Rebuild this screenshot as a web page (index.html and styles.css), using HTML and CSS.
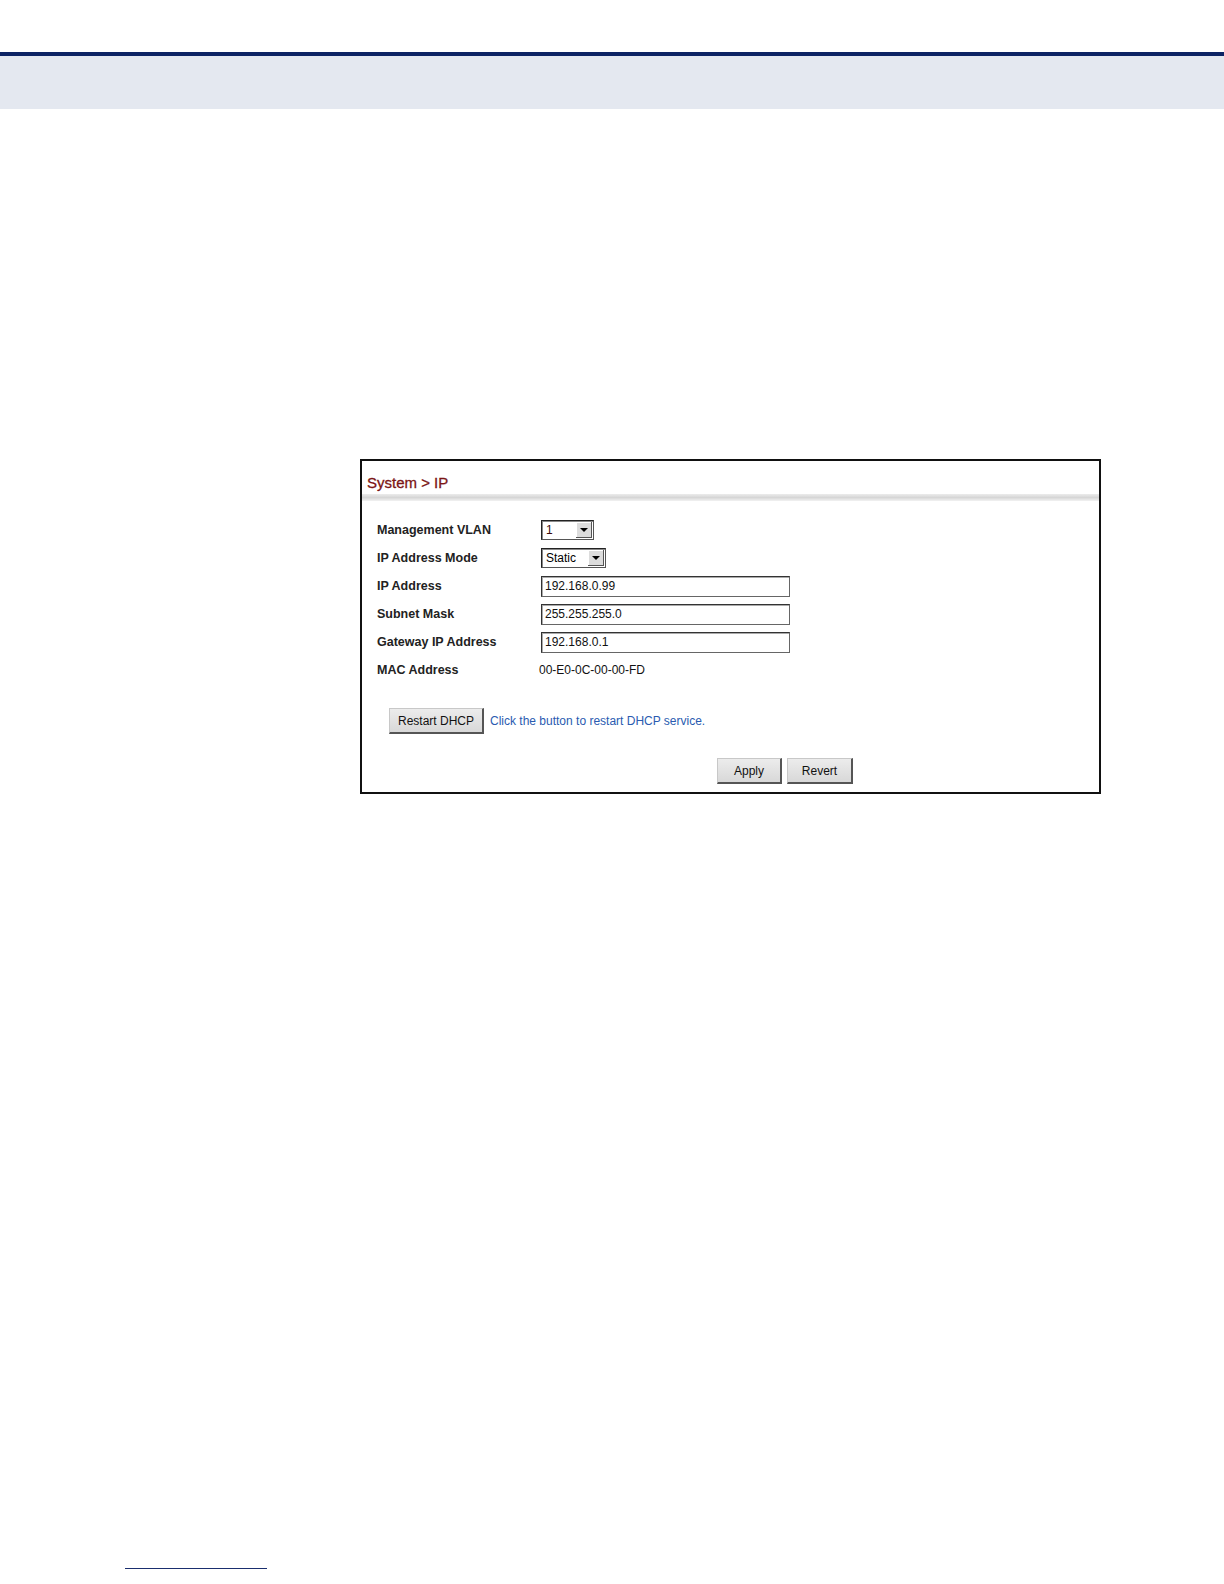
FILE: index.html
```html
<!DOCTYPE html>
<html>
<head>
<meta charset="utf-8">
<link rel="stylesheet" href="styles.css">
</head>
<body>
<div class="header">
  <div class="header-band"></div>
</div>
<div class="content">
  <div class="panel">
    <div class="panel-title">System &gt; IP</div>
    <div class="panel-rule"></div>
    <div class="form">
      <div class="label">Management VLAN</div>
      <div class="field"><span class="select sel-vlan"><span class="sel-val">1</span><span class="sel-btn"><span class="arrow"></span></span></span></div>
      <div class="label">IP Address Mode</div>
      <div class="field"><span class="select sel-mode"><span class="sel-val">Static</span><span class="sel-btn"><span class="arrow"></span></span></span></div>
      <div class="label">IP Address</div>
      <div class="field"><span class="input">192.168.0.99</span></div>
      <div class="label">Subnet Mask</div>
      <div class="field"><span class="input">255.255.255.0</span></div>
      <div class="label">Gateway IP Address</div>
      <div class="field"><span class="input">192.168.0.1</span></div>
      <div class="label">MAC Address</div>
      <div class="field"><span class="mac">00-E0-0C-00-00-FD</span></div>
    </div>
    <div class="dhcp-row">
      <span class="btn btn-dhcp">Restart DHCP</span>
      <span class="hint">Click the button to restart DHCP service.</span>
    </div>
    <div class="actions">
      <span class="btn btn-apply">Apply</span>
      <span class="btn btn-revert">Revert</span>
    </div>
  </div>
</div>
<div class="footer">
  <div class="footer-line"></div>
</div>
</body>
</html>
```

FILE: styles.css
```css
html, body {
  margin: 0;
  padding: 0;
  background: #ffffff;
  font-family: "Liberation Sans", Arial, sans-serif;
}
body {
  width: 1224px;
  height: 1584px;
  position: relative;
  overflow: hidden;
}
.header {
  padding-top: 52px;
}
.header-band {
  border-top: 4px solid #0c2364;
  height: 53px;
  background: #e4e8f0;
}
.content {
  padding-top: 350px;
  padding-left: 360px;
}
.panel {
  width: 737px;
  height: 331px;
  border: 2px solid #111111;
  display: flex;
  flex-direction: column;
}
.panel-title {
  color: #7b1414;
  font-size: 15px;
  padding-left: 5px;
  padding-top: 12px;
  height: 20px;
  line-height: 20px;
  -webkit-text-stroke: 0.3px #7b1414;
}
.panel-rule {
  margin-top: 1px;
  height: 7px;
  background: linear-gradient(#ececec, #d6d6d6 50%, #f2f2f2);
}
.form {
  display: grid;
  grid-template-columns: 163px auto;
  grid-auto-rows: 28px;
  padding-left: 15px;
  padding-top: 15px;
}
.label {
  font-size: 12.5px;
  font-weight: bold;
  color: #222222;
  line-height: 28px;
  height: 28px;
}
.field {
  display: flex;
  align-items: center;
  height: 28px;
}
.select {
  display: flex;
  height: 18px;
  border: 1px solid #222;
  border-right-color: #555;
  border-bottom-color: #555;
  box-shadow: inset 1px 1px 0 #888;
  background: #fff;
  font-size: 12px;
  color: #000;
  margin-left: 1px;
}
.sel-vlan { width: 51px; }
.sel-mode { width: 63px; }
.sel-val {
  flex: 1;
  line-height: 18px;
  padding-left: 4px;
}
.sel-vlan .sel-val { color: #3a0a0a; }
.sel-btn {
  width: 16px;
  height: 16px;
  margin: 1px 1px 1px 0;
  background: #dcdcdc;
  border-right: 1px solid #555;
  border-bottom: 1px solid #555;
  box-shadow: inset 1px 1px 0 #fff;
  display: flex;
  align-items: center;
  justify-content: center;
  box-sizing: border-box;
}
.arrow {
  width: 0;
  height: 0;
  border-left: 4px solid transparent;
  border-right: 4px solid transparent;
  border-top: 4px solid #000;
  margin-top: 1px;
}
.input {
  display: block;
  width: 244px;
  height: 19px;
  line-height: 19px;
  border: 1px solid #666;
  border-top-color: #333;
  border-left-color: #333;
  box-shadow: inset 1px 1px 0 #aaa;
  padding-left: 3px;
  font-size: 12px;
  color: #111;
  margin-left: 1px;
}
.mac {
  font-size: 12px;
  color: #111;
  margin-left: -1px;
}
.dhcp-row {
  display: flex;
  align-items: center;
  padding-left: 27px;
  margin-top: 24px;
  gap: 6px;
}
.btn {
  display: inline-flex;
  align-items: center;
  justify-content: center;
  height: 24px;
  box-sizing: border-box;
  background: linear-gradient(#ececec, #d8d8d8);
  border: 1px solid #c8c8c8;
  border-right: 2px solid #555;
  border-bottom: 2px solid #555;
  font-size: 12px;
  color: #111;
  padding-top: 1px;
}
.btn-dhcp { width: 95px; height: 26px; }
.hint {
  font-size: 12px;
  color: #2a5bb0;
}
.actions {
  display: flex;
  padding-left: 355px;
  margin-top: 24px;
  gap: 5px;
}
.btn-apply { width: 65px; height: 26px; }
.btn-revert { width: 66px; height: 26px; }
.footer {
  position: absolute;
  left: 125px;
  top: 1568px;
}
.footer-line {
  width: 142px;
  height: 1px;
  background: #1a2e6e;
}
```
